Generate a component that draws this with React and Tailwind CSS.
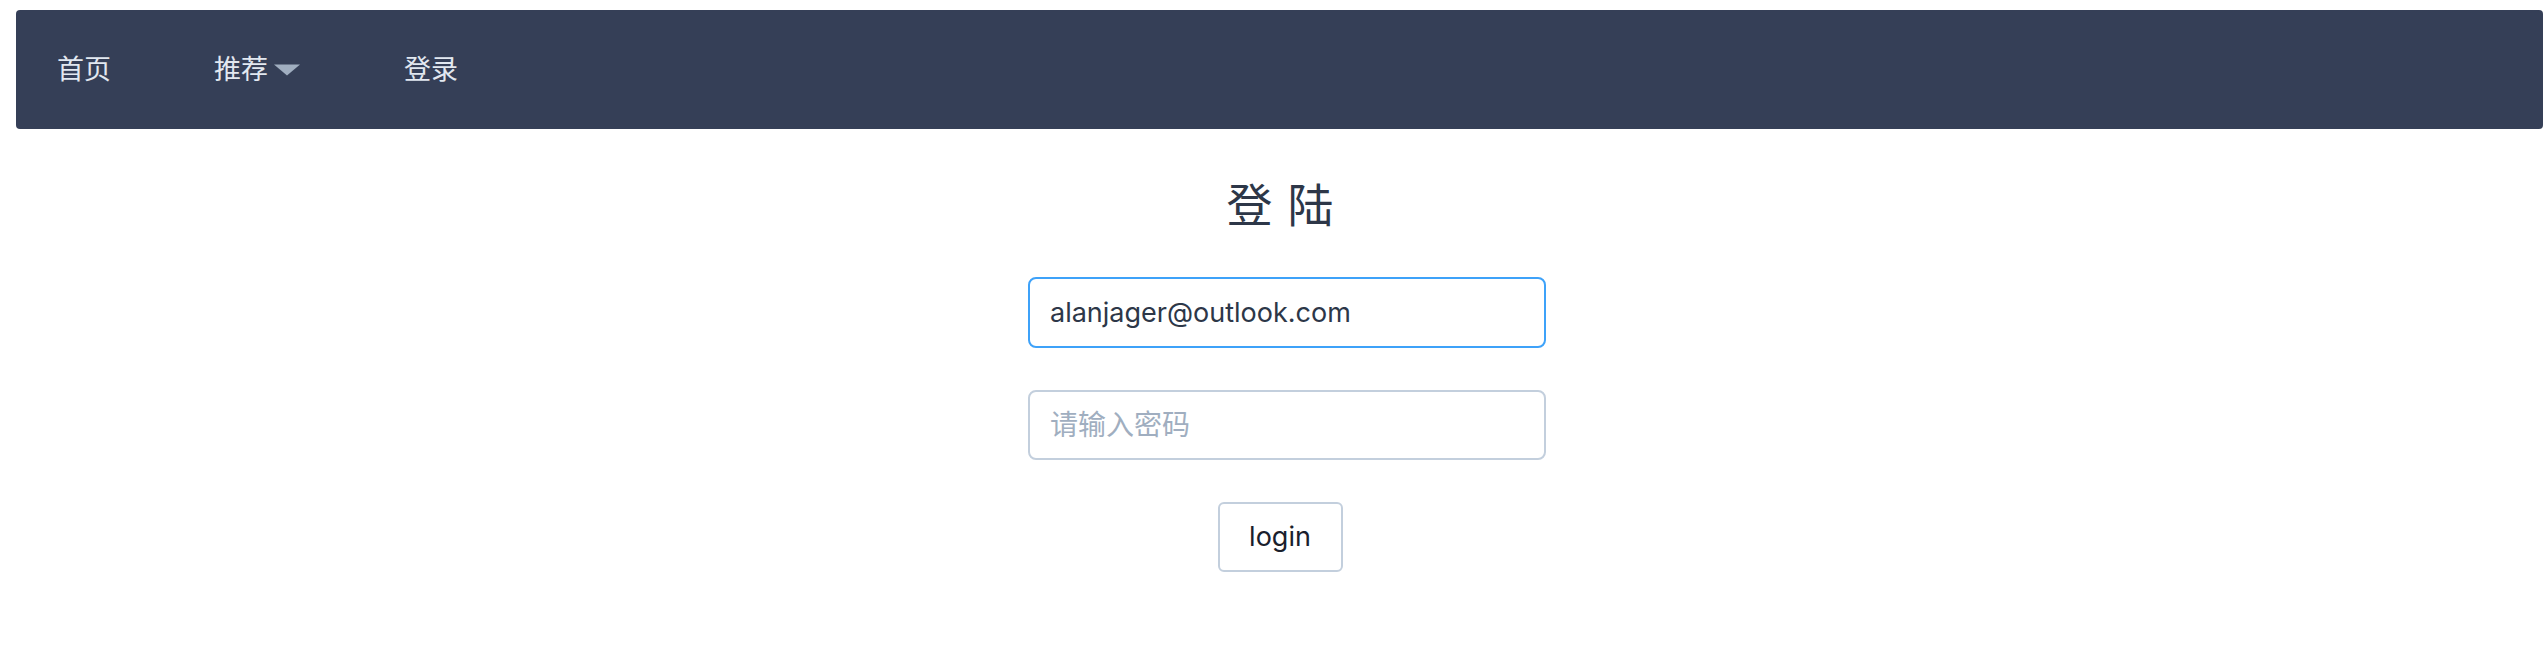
import React, { useState } from "react";

const font = "font-['Inter','Noto_Sans_CJK_SC',sans-serif]";

const App = () => {
  const [email, setEmail] = useState("alanjager@outlook.com");
  const [password, setPassword] = useState("");

  return (
    <div className={`min-h-[648px] bg-white ${font}`}>
      {/* Top nav */}
      <nav className="mt-[10px] ml-[16px] mr-[3px] h-[119px] rounded-[4px] bg-[#353f57] flex items-center pl-[41px] gap-[103px] text-[27px] text-[#e2e8f0]">
        <a href="#" className="leading-none">首页</a>
        <a href="#" className="leading-none flex items-center">
          推荐
          <svg className="ml-[5px]" width="28" height="12" viewBox="0 0 28 12">
            <path d="M1 0.5 L27 0.5 L14 11.5 Z" fill="#a0aec0" />
          </svg>
        </a>
        <a href="#" className="leading-none">登录</a>
      </nav>

      {/* Login form */}
      <div className="w-full pl-[28px] flex flex-col items-center">
        <h1 className="mt-[48px] mr-[14px] flex gap-[15px] text-[46px] leading-[56px] text-[#2d3748] font-normal">
          <span>登</span>
          <span>陆</span>
        </h1>
        <input
          type="email"
          value={email}
          onChange={(e) => setEmail(e.target.value)}
          className="mt-[44px] w-[518px] h-[71px] px-[20px] rounded-[8px] border-2 border-[#3ea2f9] outline-none text-[27px] text-[#2d3748]"
        />
        <input
          type="password"
          value={password}
          placeholder="请输入密码"
          onChange={(e) => setPassword(e.target.value)}
          className="mt-[42px] w-[518px] h-[70px] px-[20px] rounded-[8px] border-2 border-[#c3cfdd] outline-none text-[27px] text-[#2d3748] placeholder:text-[28px] placeholder:text-[#a0aec0]"
        />
        <button className="mt-[42px] mr-[14px] w-[125px] h-[70px] rounded-[6px] border-2 border-[#c3cfdd] bg-white text-[27px] text-[#1a202c]">
          login
        </button>
      </div>
    </div>
  );
};

export default App;
